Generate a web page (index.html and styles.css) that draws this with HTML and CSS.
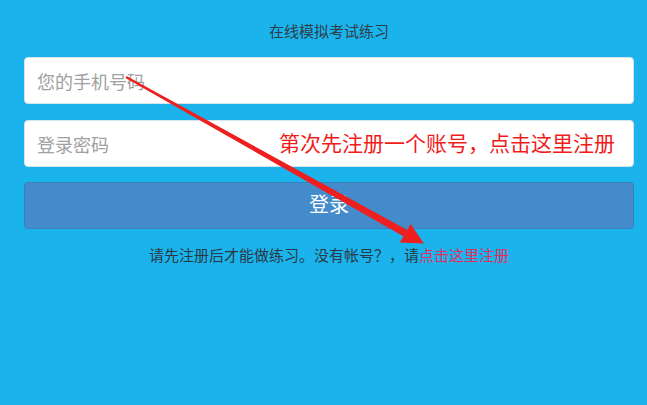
FILE: index.html
```html
<!DOCTYPE html>
<html lang="zh">
<head>
<meta charset="utf-8">
<title>在线模拟考试练习</title>
<link rel="stylesheet" href="styles.css">
</head>
<body>
<div class="page">
  <h1 class="title">在线模拟考试练习</h1>
  <form class="form">
    <input class="field" type="text" placeholder="您的手机号码">
    <div class="field-wrap">
      <input class="field" type="password" placeholder="登录密码">
      <span class="note">第次先注册一个账号，点击这里注册</span>
    </div>
    <button class="btn" type="button">登录</button>
  </form>
  <p class="hint">请先注册后才能做练习。没有帐号？，请<a class="link" href="#">点击这里注册</a></p>
</div>
<svg class="arrow" width="647" height="405" viewBox="0 0 647 405">
  <polygon points="126.5,76.1 125.5,77.9 403.8,236.5 407.2,230.0" fill="#ee1f1f"/>
  <polygon points="424,243.5 399.8,242.4 410.6,223.9" fill="#ee1f1f"/>
</svg>
</body>
</html>
```
FILE: styles.css
```css
html, body {
  margin: 0;
  padding: 0;
  height: 100%;
}
body {
  background: #1bb3eb;
  font-family: "Noto Sans CJK SC", "Liberation Sans", sans-serif;
  color: #333;
  position: relative;
  overflow: hidden;
}
.page {
  padding: 20px 13px 0 24px;
}
.title {
  margin: 0 0 15px;
  font-size: 15px;
  font-weight: normal;
  line-height: 22px;
  text-align: center;
  color: #2d3e48;
}
.form {
  display: flex;
  flex-direction: column;
  gap: 16px;
  margin: 0;
}
.field-wrap {
  position: relative;
}
.field {
  box-sizing: border-box;
  display: block;
  width: 100%;
  height: 47px;
  margin: 0;
  padding: 0 12px;
  border: 1px solid #d5e3ea;
  border-radius: 4px;
  background: #fff;
  font-family: inherit;
  font-size: 18px;
  color: #555;
  outline: none;
}
.field::placeholder {
  color: #a0a0a0;
}
.note {
  position: absolute;
  left: 255px;
  top: 8px;
  font-size: 21px;
  line-height: 28px;
  color: #f01c1c;
  white-space: nowrap;
}
.btn {
  box-sizing: border-box;
  height: 47px;
  margin-top: -1px;
  padding: 0 0 4px;
  border: 1px solid #3a7fbf;
  border-radius: 4px;
  background: #438bca;
  color: #fff;
  font-family: inherit;
  font-size: 20px;
}
.hint {
  margin: 15px 0 0;
  font-size: 15px;
  line-height: 22px;
  text-align: center;
  color: #2a3a44;
}
.link {
  color: #e32d5c;
  text-decoration: none;
}
.arrow {
  position: absolute;
  left: 0;
  top: 0;
  pointer-events: none;
}
```
